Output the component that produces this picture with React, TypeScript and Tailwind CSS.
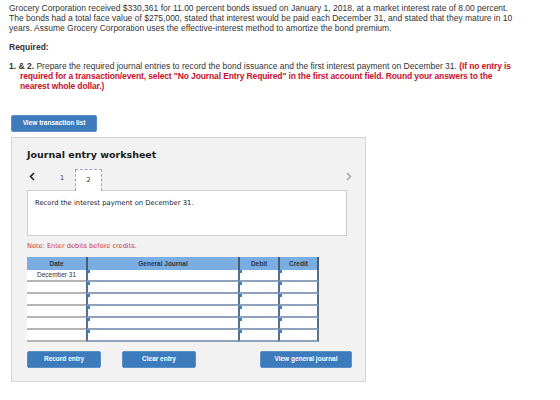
import React from "react";

const sans = { fontFamily: '"Liberation Sans", Arial, sans-serif' };
const verdana = { fontFamily: '"DejaVu Sans", Verdana, sans-serif' };

// one blue tick in the top left corner of every input cell
function InputCell({ last }: { last?: boolean }) {
  return (
    <div
      className={`relative bg-white border-l-2 border-[#55708f] border-b-2 border-b-[#8ea3bb] ${
        last ? "border-r-2 border-r-[#55708f]" : ""
      }`}
    >
      <span className="absolute left-0 top-0 w-[2px] h-[3px] bg-[#3b82d6]"></span>
    </div>
  );
}

function JournalTable() {
  const rows = ["December 31", "", "", "", "", ""];
  return (
    <div className="w-[292px] grid grid-cols-[59px_152px_40px_41px]" style={sans}>
      <div className="h-[13px] bg-[#7aaee3] flex items-center justify-center text-[6.5px] font-bold text-[#2d3340]">
        Date
      </div>
      <div className="h-[13px] bg-[#7aaee3] border-l-2 border-[#4b5a70] flex items-center justify-center text-[6.5px] font-bold text-[#2d3340]">
        General Journal
      </div>
      <div className="h-[13px] bg-[#7aaee3] border-l-2 border-[#4b5a70] flex items-center justify-center text-[6.5px] font-bold text-[#2d3340]">
        Debit
      </div>
      <div className="h-[13px] bg-[#7aaee3] border-l-2 border-r-2 border-[#4b5a70] flex items-center justify-center text-[6.5px] font-bold text-[#2d3340]">
        Credit
      </div>
      {rows.map((d, i) => (
        <React.Fragment key={i}>
          <div className="h-[12px] bg-white border-b-2 border-[#b4b4b4] flex items-center justify-center text-[6.5px] text-[#333]">
            {d}
          </div>
          <InputCell />
          <InputCell />
          <InputCell last />
        </React.Fragment>
      ))}
    </div>
  );
}

function BlueButton({ label, className }: { label: string; className: string }) {
  return (
    <button
      className={`${className} block h-[17px] shrink-0 rounded-[2px] bg-[#3d7bbd] border border-[#5b8fc7] text-white text-[6.5px] font-bold leading-none`}
      style={sans}
    >
      {label}
    </button>
  );
}

function Chevron({ dir, color }: { dir: "left" | "right"; color: string }) {
  return (
    <svg width="6" height="9" viewBox="0 0 6 9" className="block">
      <path
        d={dir === "left" ? "M5 1 L1.5 4.5 L5 8" : "M1 1 L4.5 4.5 L1 8"}
        fill="none"
        stroke={color}
        strokeWidth="1.6"
      />
    </svg>
  );
}

export default function App() {
  return (
    <div className="w-[560px] h-[400px] bg-white overflow-hidden flex flex-col">
      <div className="pt-[3px] pl-[9px] text-[#333] text-[8.5px] leading-[10px]" style={sans}>
        <p>
          Grocery Corporation received $330,361 for 11.00 percent bonds issued on January 1, 2018, at a market interest rate of 8.00 percent.
          <br />
          The bonds had a total face value of $275,000, stated that interest would be paid each December 31, and stated that they mature in 10
          <br />
          years. Assume Grocery Corporation uses the effective-interest method to amortize the bond premium.
        </p>
        <p className="mt-[9px] font-bold">Required:</p>
        <p className="mt-[9px] pl-[11px] -indent-[11px]">
          <span className="font-bold">1. &amp; 2.</span> Prepare the required journal entries to record the bond issuance and the first interest payment on December 31.{" "}
          <span className="font-bold text-[#c8102e] tracking-[-0.12px]">
            (If no entry is
            <br />
            required for a transaction/event, select "No Journal Entry Required" in the first account field. Round your answers to the
            <br />
            nearest whole dollar.)
          </span>
        </p>
      </div>

      <div className="ml-[11px] mt-[24px] flex flex-col">
        <BlueButton label="View transaction list" className="w-[86px]" />

        <div className="mt-[5px] w-[355px] h-[245px] bg-[#f2f2f2] border border-[#d4d4d4] pl-[15px] pr-[19px] pt-[9px] flex flex-col">
          <h2 className="text-[9.5px] font-bold text-[#1a1a1a] leading-[16px]" style={verdana}>
            Journal entry worksheet
          </h2>

          <div className="mt-[6px] h-[22px] flex items-start" style={verdana}>
            <span className="ml-[2px] mt-[3px]">
              <Chevron dir="left" color="#222" />
            </span>
            <span className="ml-[25px] mt-[4px] text-[6.5px] text-[#333] leading-[10px]">1</span>
            <div className="ml-[11px] w-[27px] h-[22px] bg-white border border-dashed border-b-0 border-[#8fa6c4] flex items-center justify-center text-[6.5px] text-[#222] relative z-10">
              2
            </div>
            <span className="ml-auto mr-[-6px] mt-[3px]">
              <Chevron dir="right" color="#a8a8a8" />
            </span>
          </div>

          <div className="-mt-px w-[320px] h-[46px] bg-white border border-[#cfcfcf] pl-[7px] pt-[7px] text-[6.8px] text-[#222]" style={verdana}>
            Record the interest payment on December 31.
          </div>

          <p className="mt-[5px] text-[6.6px] text-[#c8353a] leading-[10px]" style={verdana}>
            Note: Enter debits before credits.
          </p>

          <div className="mt-[6px]">
            <JournalTable />
          </div>

          <div className="mt-[9px] flex items-start">
            <BlueButton label="Record entry" className="w-[74px]" />
            <BlueButton label="Clear entry" className="w-[74px] ml-[21px]" />
            <BlueButton label="View general journal" className="w-[92px] ml-[64px]" />
          </div>
        </div>
      </div>
    </div>
  );
}
